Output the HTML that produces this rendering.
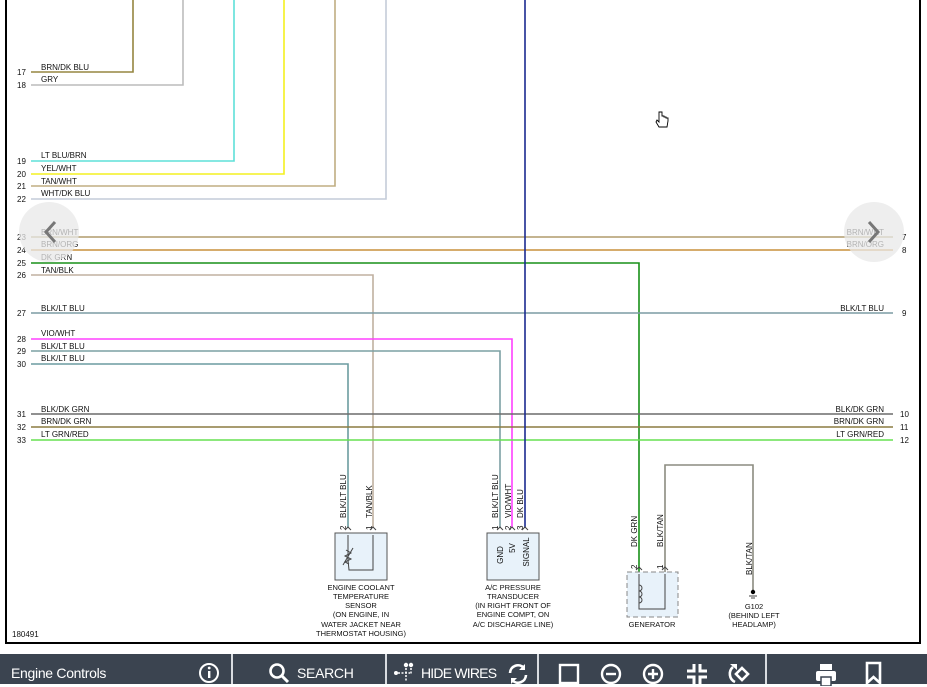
<!DOCTYPE html>
<html><head><meta charset="utf-8"><style>
html,body{margin:0;padding:0;width:927px;height:684px;overflow:hidden;background:#fff;font-family:"Liberation Sans",sans-serif}
svg{position:absolute;left:0;top:0}
#tb{position:absolute;left:0;top:654px;width:927px;height:30px;background:#3b4450;color:#fff}
#tb span{position:absolute;top:11px;font-size:14px;letter-spacing:-0.3px}
.sep{position:absolute;top:0;width:2px;height:30px;background:#d8dce0}
</style></head><body>
<svg width="927" height="654" viewBox="0 0 927 654" font-family="Liberation Sans, sans-serif">
<rect x="0" y="0" width="927" height="654" fill="#fff"/>
<line x1="6" y1="0" x2="6" y2="644" stroke="#000" stroke-width="2"/>
<line x1="920" y1="0" x2="920" y2="644" stroke="#000" stroke-width="2"/>
<line x1="6" y1="643" x2="921" y2="643" stroke="#000" stroke-width="2"/>
<g fill="none" stroke-width="1.6">
<polyline points="31,72 133,72 133,0" stroke="#958540"/>
<polyline points="31,85 183,85 183,0" stroke="#bcbcbc"/>
<polyline points="31,161 234,161 234,0" stroke="#5ee0d8"/>
<polyline points="31,174 284,174 284,0" stroke="#f4f020"/>
<polyline points="31,186 335,186 335,0" stroke="#c0ad82"/>
<polyline points="31,199 386,199 386,0" stroke="#c4ccd8"/>
<line x1="31" y1="237" x2="893" y2="237" stroke="#b09c6c"/>
<line x1="31" y1="250" x2="893" y2="250" stroke="#c8903c"/>
<polyline points="31,263 639,263 639,572" stroke="#189018"/>
<polyline points="31,275 373,275 373,528" stroke="#c0b0a0"/>
<line x1="31" y1="313" x2="893" y2="313" stroke="#7c9ca4"/>
<polyline points="31,339 512,339 512,528" stroke="#ff40ff"/>
<polyline points="31,351 500,351 500,528" stroke="#7ca0a4"/>
<polyline points="31,364 348,364 348,528" stroke="#6c9ca0"/>
<line x1="31" y1="414" x2="893" y2="414" stroke="#6c6c6c"/>
<line x1="31" y1="427" x2="893" y2="427" stroke="#8c7c40"/>
<line x1="31" y1="440" x2="893" y2="440" stroke="#66e050"/>
<line x1="525" y1="0" x2="525" y2="528" stroke="#1a2a90"/>
<polyline points="665,572 665,465 753,465 753,590" stroke="#8c8c80"/>
</g>
<rect x="335" y="533" width="52" height="47" fill="#e8f2fa" stroke="#555"/>
<rect x="487" y="533" width="52" height="47" fill="#e8f2fa" stroke="#555"/>
<rect x="627" y="572" width="51" height="45" fill="#e8f2fa" stroke="#888" stroke-dasharray="5,3"/>
<g font-size="8" fill="#111">
<text x="17" y="75">17</text><text x="17" y="88">18</text><text x="17" y="164">19</text><text x="17" y="177">20</text><text x="17" y="189">21</text><text x="17" y="202">22</text><text x="17" y="240">23</text><text x="17" y="253">24</text><text x="17" y="266">25</text><text x="17" y="278">26</text><text x="17" y="316">27</text><text x="17" y="342">28</text><text x="17" y="354">29</text><text x="17" y="367">30</text><text x="17" y="417">31</text><text x="17" y="430">32</text><text x="17" y="443">33</text>
<text x="41" y="70">BRN/DK BLU</text><text x="41" y="82">GRY</text><text x="41" y="158">LT BLU/BRN</text><text x="41" y="171">YEL/WHT</text><text x="41" y="184">TAN/WHT</text><text x="41" y="196">WHT/DK BLU</text><text x="41" y="235">BRN/WHT</text><text x="41" y="247">BRN/ORG</text><text x="41" y="260">DK GRN</text><text x="41" y="273">TAN/BLK</text><text x="41" y="311">BLK/LT BLU</text><text x="41" y="336">VIO/WHT</text><text x="41" y="349">BLK/LT BLU</text><text x="41" y="361">BLK/LT BLU</text><text x="41" y="412">BLK/DK GRN</text><text x="41" y="424">BRN/DK GRN</text><text x="41" y="437">LT GRN/RED</text>
<g text-anchor="end"><text x="884" y="235">BRN/WHT</text><text x="884" y="247">BRN/ORG</text><text x="884" y="311">BLK/LT BLU</text><text x="884" y="412">BLK/DK GRN</text><text x="884" y="424">BRN/DK GRN</text><text x="884" y="437">LT GRN/RED</text></g>
<text x="902" y="240">7</text><text x="902" y="253">8</text><text x="902" y="316">9</text><text x="900" y="417">10</text><text x="900" y="430">11</text><text x="900" y="443">12</text>
<text x="12" y="637">180491</text>
<text transform="translate(346,518) rotate(-90)">BLK/LT BLU</text>
<text transform="translate(372,518) rotate(-90)">TAN/BLK</text>
<text transform="translate(498,518) rotate(-90)">BLK/LT BLU</text>
<text transform="translate(511,518) rotate(-90)">VIO/WHT</text>
<text transform="translate(523,518) rotate(-90)">DK BLU</text>
<text transform="translate(637,547) rotate(-90)">DK GRN</text>
<text transform="translate(663,547) rotate(-90)">BLK/TAN</text>
<text transform="translate(752,575) rotate(-90)">BLK/TAN</text>
<text transform="translate(346,530) rotate(-90)">2</text><text transform="translate(372,530) rotate(-90)">1</text>
<text transform="translate(498,530) rotate(-90)">1</text><text transform="translate(511,530) rotate(-90)">2</text><text transform="translate(523,530) rotate(-90)">3</text>
<text transform="translate(637,569) rotate(-90)">2</text><text transform="translate(663,569) rotate(-90)">1</text>
<text transform="translate(503,555) rotate(-90)" text-anchor="middle">GND</text>
<text transform="translate(515,548) rotate(-90)" text-anchor="middle">5V</text>
<text transform="translate(529,552) rotate(-90)" text-anchor="middle">SIGNAL</text>
<g text-anchor="middle" font-size="7.5">
<text x="361" y="590">ENGINE COOLANT</text><text x="361" y="599">TEMPERATURE</text><text x="361" y="608">SENSOR</text><text x="361" y="617">(ON ENGINE, IN</text><text x="361" y="627">WATER JACKET NEAR</text><text x="361" y="636">THERMOSTAT HOUSING)</text>
<text x="513" y="590">A/C PRESSURE</text><text x="513" y="599">TRANSDUCER</text><text x="513" y="608">(IN RIGHT FRONT OF</text><text x="513" y="617">ENGINE COMPT, ON</text><text x="513" y="627">A/C DISCHARGE LINE)</text>
<text x="652" y="627">GENERATOR</text>
<text x="754" y="609">G102</text><text x="754" y="618">(BEHIND LEFT</text><text x="754" y="627">HEADLAMP)</text>
</g>
</g>
<g fill="none" stroke="#444" stroke-width="1">
<polyline points="348,535 348,560 349,570 373,570 373,535"/>
<polyline points="346,550 351,553 345,556 351,559 345,562 349,564"/>
<line x1="343" y1="565" x2="353" y2="548"/>
<polyline points="639,574 639,609 665,609 665,574"/>
<path d="M639,585 a3,3 0 0 1 0,6 a3,3 0 0 1 0,6 a3,3 0 0 1 0,6"/>
<path d="M345,530 l3,-3 3,3 M370,530 l3,-3 3,3 M497,530 l3,-3 3,3 M509,530 l3,-3 3,3 M522,530 l3,-3 3,3 M636,570 l3,-3 3,3 M662,570 l3,-3 3,3"/>
<line x1="749" y1="596" x2="757" y2="596"/><line x1="751" y1="598" x2="755" y2="598"/>
</g>
<circle cx="753" cy="592" r="2.2" fill="#000"/>
<circle cx="49" cy="232" r="30" fill="#e8e8e8" opacity="0.75"/>
<circle cx="874" cy="232" r="30" fill="#e8e8e8" opacity="0.75"/>
<polyline points="55,222 46,232 55,242" fill="none" stroke="#777" stroke-width="3"/>
<polyline points="869,222 878,232 869,242" fill="none" stroke="#777" stroke-width="3"/>
<path d="M659,112 v10 l-2,-2 -1,2 3,5 h8 l1,-6 v-3 h-2 v-1 h-2 v-1 h-2 v-4 z" fill="#fff" stroke="#000" stroke-width="0.9"/>
</svg>
<div id="tb">
<span style="left:11px">Engine Controls</span>
<svg style="left:198px;top:8px" width="24" height="24"><circle cx="11" cy="11" r="9" fill="none" stroke="#fff" stroke-width="2"/><rect x="10" y="9" width="2.4" height="7" fill="#fff"/><circle cx="11.2" cy="6" r="1.4" fill="#fff"/></svg>
<div class="sep" style="left:231px"></div>
<svg style="left:268px;top:8px" width="24" height="24"><circle cx="9" cy="9" r="6.5" fill="none" stroke="#fff" stroke-width="2.6"/><line x1="14" y1="14" x2="20" y2="20" stroke="#fff" stroke-width="3"/></svg>
<span style="left:297px">SEARCH</span>
<div class="sep" style="left:385px"></div>
<svg style="left:392px;top:6px" width="24" height="24"><circle cx="4" cy="13" r="2" fill="#fff"/><circle cx="14" cy="5" r="2.2" fill="#fff"/><circle cx="19" cy="5" r="2.2" fill="#fff"/><path d="M6,13 h12 M14,8 v14 M19,8 v6" stroke="#fff" stroke-width="1.5" stroke-dasharray="2,1.5"/></svg>
<span style="left:421px;letter-spacing:-0.8px">HIDE WIRES</span>
<svg style="left:506px;top:8px" width="24" height="24"><path d="M4,11 a8,8 0 0 1 14,-5 M20,13 a8,8 0 0 1 -14,5" fill="none" stroke="#fff" stroke-width="2.6"/><path d="M19,2 v6 h-6 z M5,22 v-6 h6 z" fill="#fff"/></svg>
<div class="sep" style="left:537px"></div>
<svg style="left:558px;top:9px" width="24" height="24"><rect x="2" y="2" width="18" height="18" fill="none" stroke="#fff" stroke-width="2.4"/></svg>
<svg style="left:600px;top:9px" width="24" height="24"><circle cx="11" cy="11" r="9" fill="none" stroke="#fff" stroke-width="2.4"/><line x1="6" y1="11" x2="16" y2="11" stroke="#fff" stroke-width="2.4"/></svg>
<svg style="left:642px;top:9px" width="24" height="24"><circle cx="11" cy="11" r="9" fill="none" stroke="#fff" stroke-width="2.4"/><path d="M6,11 h10 M11,6 v10" stroke="#fff" stroke-width="2.4"/></svg>
<svg style="left:686px;top:8px" width="24" height="24"><path d="M8,2 v7 h-7 M14,2 v7 h7 M8,22 v-7 h-7 M14,22 v-7 h7" fill="none" stroke="#fff" stroke-width="3"/></svg>
<svg style="left:726px;top:8px" width="26" height="24"><path d="M7,5 a9,9 0 0 0 2,15" fill="none" stroke="#fff" stroke-width="2.6"/><path d="M4,2 h7 v6 z" fill="#fff"/><path d="M16,6 l6,6 -6,6 -6,-6 z" fill="none" stroke="#fff" stroke-width="2.6"/></svg>
<div class="sep" style="left:765px"></div>
<svg style="left:814px;top:8px" width="26" height="24"><rect x="6" y="2" width="12" height="6" fill="#fff"/><rect x="2" y="9" width="20" height="10" rx="2" fill="#fff"/><rect x="7" y="15" width="10" height="9" fill="#fff" stroke="#3b4450" stroke-width="1.5"/></svg>
<svg style="left:864px;top:7px" width="20" height="24"><path d="M3,2 h13 v20 l-6.5,-6 -6.5,6 z" fill="none" stroke="#fff" stroke-width="2.6"/></svg>
</div>
</body></html>
